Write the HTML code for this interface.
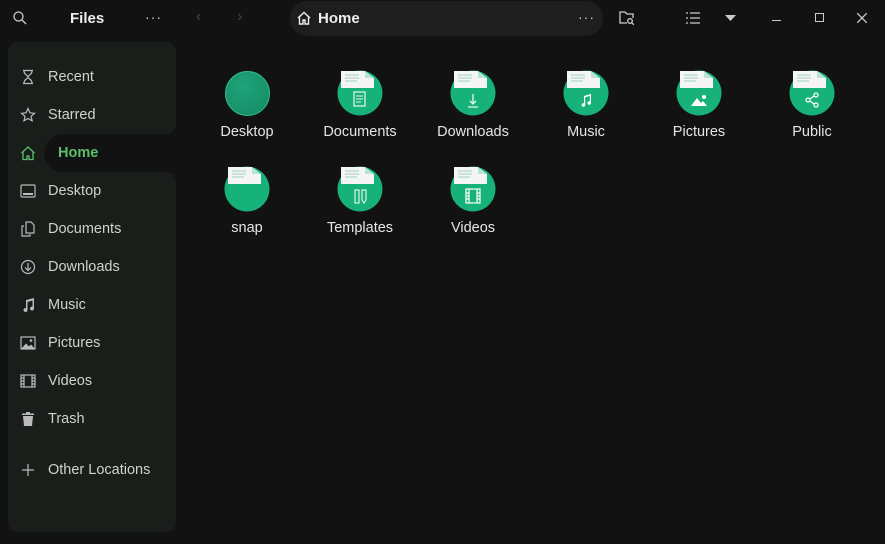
<!DOCTYPE html>
<html><head><meta charset="utf-8"><style>
*{margin:0;padding:0;box-sizing:border-box}
body{width:885px;height:544px;background:#121212;font-family:"Liberation Sans",sans-serif;color:#ddd;position:relative;overflow:hidden}
.a{position:absolute}
.side{left:8px;top:42px;width:168px;height:490px;background:#1a1e1a;border-radius:10px}
.notch{left:44px;top:134px;width:132px;height:38px;background:#121212;border-radius:19px 0 0 19px}
.notch2{left:150px;top:126px;width:26px;height:54px;background:#121212}
.row{left:20px;font-size:14.5px;color:#cfd2cf;display:flex;align-items:center}
.row svg{width:16px;height:16px;margin-right:12px}
.lbl{font-size:14.5px;color:#e6e6e6;text-align:center;width:110px}
.dots{font-size:14px;color:#ccc;letter-spacing:1px}
</style></head><body>
<div class="a side"></div>
<div class="a notch2"></div>
<div class="a" style="left:150px;top:96px;width:26px;height:38px;background:#1a1e1a;border-radius:0 0 10px 0"></div>
<div class="a" style="left:150px;top:172px;width:26px;height:38px;background:#1a1e1a;border-radius:0 10px 0 0"></div>
<div class="a notch"></div>

<!-- header -->
<svg class="a" style="left:12px;top:10px" width="16" height="16" viewBox="0 0 16 16" fill="none" stroke="#ccc" stroke-width="1.3"><circle cx="6.5" cy="6.5" r="4.5"/><path d="M10 10l4 4"/></svg>
<div class="a" style="left:70px;top:10px;font-size:15px;font-weight:bold;color:#eee">Files</div>
<div class="a dots" style="left:145px;top:9px">···</div>
<div class="a" style="left:196px;top:8px;font-size:16px;color:#444">‹</div>
<div class="a" style="left:237px;top:8px;font-size:16px;color:#444">›</div>
<div class="a" style="left:290px;top:1px;width:313px;height:35px;background:#1e1e1e;border-radius:18px"></div>
<svg class="a" style="left:296px;top:10px" width="16" height="16" viewBox="0 0 16 16" fill="none" stroke="#eee" stroke-width="1.4"><path d="M2 8L8 2.5 14 8M3.5 7v7h3.5v-4h2v4h3.5V7"/></svg>
<div class="a" style="left:318px;top:10px;font-size:15px;font-weight:bold;color:#eee">Home</div>
<div class="a dots" style="left:578px;top:9px">···</div>
<svg class="a" style="left:618px;top:9px" width="18" height="17" viewBox="0 0 18 17" fill="none" stroke="#ccc" stroke-width="1.3"><path d="M9 14H2V3h5l2 2h6v4"/><circle cx="12" cy="12" r="2.3"/><path d="M13.8 13.8l2 2"/></svg>
<svg class="a" style="left:686px;top:12px" width="14" height="12" viewBox="0 0 14 12" stroke="#ccc" stroke-width="1.2"><path d="M0 1h2M4 1h10M0 6h2M4 6h10M0 11h2M4 11h10"/></svg>
<svg class="a" style="left:725px;top:15px" width="11" height="6"><path d="M0 0h11L5.5 6z" fill="#ccc"/></svg>
<div class="a" style="left:772px;top:20px;width:9px;height:1.3px;background:#ccc"></div>
<div class="a" style="left:815px;top:13px;width:9px;height:9px;border:1.3px solid #ccc"></div>
<svg class="a" style="left:857px;top:13px" width="10" height="10" stroke="#ccc" stroke-width="1.3"><path d="M0 0l10 10M10 0L0 10"/></svg>

<!-- sidebar rows -->
<div class="a row" style="top:69px"><svg viewBox="0 0 16 16" fill="none" stroke="#bbb" stroke-width="1.2"><path d="M3 1.5h10M3 14.5h10M4 2c0 4 4 4 4 6s-4 2-4 6M12 2c0 4-4 4-4 6s4 2 4 6"/></svg>Recent</div>
<div class="a row" style="top:107px"><svg viewBox="0 0 16 16" fill="none" stroke="#bbb" stroke-width="1.2"><path d="M8 1.5l2 4.3 4.5.5-3.4 3 1 4.5L8 11.5l-4 2.3 1-4.5-3.4-3 4.5-.5z"/></svg>Starred</div>
<div class="a row" style="top:145px;color:#5cbf6a;font-weight:bold"><svg viewBox="0 0 16 16" fill="none" stroke="#5cbf6a" stroke-width="1.3" style="margin-right:22px"><path d="M1.5 8L8 2l6.5 6M3 7v7.5h4v-3.5h2v3.5h4V7"/></svg>Home</div>
<div class="a row" style="top:183px"><svg viewBox="0 0 16 16" fill="none" stroke="#bbb" stroke-width="1.2"><rect x="1" y="2" width="14" height="12" rx="1"/><path d="M3 11h10" stroke-width="2"/></svg>Desktop</div>
<div class="a row" style="top:221px"><svg viewBox="0 0 16 16" fill="none" stroke="#bbb" stroke-width="1.2"><path d="M6 1h5l3 3v8H6zM4 5H2v10h8v-2"/></svg>Documents</div>
<div class="a row" style="top:259px"><svg viewBox="0 0 16 16" fill="none" stroke="#bbb" stroke-width="1.2"><circle cx="8" cy="8" r="6.5"/><path d="M8 4v7M5 8.5l3 3 3-3"/></svg>Downloads</div>
<div class="a row" style="top:297px"><svg viewBox="0 0 16 16" fill="#bbb"><path d="M6 3l8-2v10.5a2 2 0 1 1-1.5-1.9V3.5L7.5 5v8a2 2 0 1 1-1.5-1.9z"/></svg>Music</div>
<div class="a row" style="top:335px"><svg viewBox="0 0 16 16"><rect x="1" y="2" width="14" height="12" fill="none" stroke="#bbb" stroke-width="1.2"/><path d="M1.5 13.5l4.5-5 3 3 2-2 3.5 4z" fill="#bbb"/><circle cx="11" cy="5.5" r="1.3" fill="#bbb"/></svg>Pictures</div>
<div class="a row" style="top:373px"><svg viewBox="0 0 16 16" fill="none" stroke="#bbb" stroke-width="1.2"><rect x="1" y="2" width="14" height="12"/><path d="M4 2v12M12 2v12M1 5h3M1 8h3M1 11h3M12 5h3M12 8h3M12 11h3"/></svg>Videos</div>
<div class="a row" style="top:411px"><svg viewBox="0 0 16 16" fill="#bbb"><path d="M6 1h4v1.5h4V4H2V2.5h4zM3 5h10l-1 10H4z"/></svg>Trash</div>
<div class="a row" style="top:462px"><svg viewBox="0 0 16 16" stroke="#bbb" stroke-width="1.2"><path d="M8 2v12M2 8h12"/></svg>Other Locations</div>

<!-- folders -->
<svg width="0" height="0" style="position:absolute"><defs>
<g id="f"><circle cx="23" cy="23" r="22.5" fill="#17b27a"/><path d="M4 1h24l9 7v10H4z" fill="#f5f5f5"/><path d="M28 1v7h9" fill="#b9e5d2"/><path d="M8 5h14M8 8h14M8 11h12" stroke="#9bd5bb" stroke-width="1"/></g>
</defs></svg>
<div class="a" style="left:225px;top:71px;width:45px;height:45px;border-radius:50%;background:radial-gradient(circle at 40% 35%,#1fa37a,#148a63);border:1px solid #2fbb8c"></div>
<div class="a lbl" style="left:192px;top:124px">Desktop</div>

<svg class="a" style="left:337px;top:70px" width="47" height="47"><use href="#f"/><rect x="17" y="22" width="11" height="14" fill="none" stroke="#e8f7f0" stroke-width="1.2"/><path d="M19 26h7M19 29h7M19 32h5" stroke="#e8f7f0"/></svg>
<div class="a lbl" style="left:305px;top:124px">Documents</div>
<svg class="a" style="left:450px;top:70px" width="47" height="47"><use href="#f"/><path d="M23 24v10M20 31l3 3 3-3M18 37h10" stroke="#e8f7f0" stroke-width="1.3" fill="none"/></svg>
<div class="a lbl" style="left:418px;top:124px">Downloads</div>
<svg class="a" style="left:563px;top:70px" width="47" height="47"><use href="#f"/><path d="M21 26l7-2v9a1.8 1.8 0 1 1-1.2-1.7V26l-4.6 1.2V35a1.8 1.8 0 1 1-1.2-1.7z" fill="#fff"/></svg>
<div class="a lbl" style="left:531px;top:124px">Music</div>
<svg class="a" style="left:676px;top:70px" width="47" height="47"><use href="#f"/><path d="M15 36l6-8 4 5 2-2 4 5z" fill="#fff"/><circle cx="28" cy="27" r="2" fill="#fff"/></svg>
<div class="a lbl" style="left:644px;top:124px">Pictures</div>
<svg class="a" style="left:789px;top:70px" width="47" height="47"><use href="#f"/><g fill="none" stroke="#fff" stroke-width="1.2"><circle cx="19" cy="30" r="2"/><circle cx="27" cy="25" r="2"/><circle cx="27" cy="35" r="2"/><path d="M21 29l4-3M21 31l4 3"/></g></svg>
<div class="a lbl" style="left:757px;top:124px">Public</div>

<svg class="a" style="left:224px;top:166px" width="47" height="47"><use href="#f"/></svg>
<div class="a lbl" style="left:192px;top:220px">snap</div>
<svg class="a" style="left:337px;top:166px" width="47" height="47"><use href="#f"/><rect x="18" y="24" width="4" height="13" fill="none" stroke="#fff"/><path d="M25 24h4v10l-2 3-2-3z" fill="none" stroke="#fff"/></svg>
<div class="a lbl" style="left:305px;top:220px">Templates</div>
<svg class="a" style="left:450px;top:166px" width="47" height="47"><use href="#f"/><g fill="none" stroke="#fff" stroke-width="1.2"><rect x="16" y="23" width="14" height="14"/><path d="M19 23v14M27 23v14M16 27h3M16 30h3M16 33h3M27 27h3M27 30h3M27 33h3"/></g></svg>
<div class="a lbl" style="left:418px;top:220px">Videos</div>
</body></html>
